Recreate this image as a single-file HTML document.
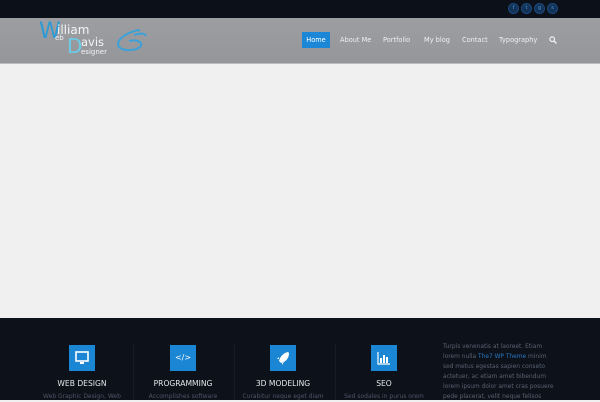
<!DOCTYPE html>
<html><head><meta charset="utf-8"><style>
*{margin:0;padding:0;box-sizing:border-box}
body{width:600px;height:400px;overflow:hidden;font-family:"DejaVu Sans","Liberation Sans",sans-serif;background:#f0f0f0;position:relative}
.top{position:absolute;left:0;top:0;width:600px;height:18px;background:#0b1019}
.soc{position:absolute;top:3px;width:11px;height:11px;border-radius:50%;background:#123257;border:1px solid #1c4a7c;color:#4a8fd0;font-size:5.5px;line-height:9px;text-align:center}
.hdr{position:absolute;left:0;top:18px;width:600px;height:46px;background:linear-gradient(#9d9ea1,#95969a);border-bottom:1px solid #bbb}
.nav{position:absolute;top:36px;font-size:6.6px;color:#eef0f2;white-space:nowrap}
.home{position:absolute;left:302px;top:32px;width:28px;height:16px;background:#1b87d6;color:#fff;font-size:6.6px;line-height:16px;text-align:center}
.ft{position:absolute;left:0;top:318px;width:600px;height:82px;background:#0c111a}
.box{position:absolute;top:345px;width:26px;height:26px;background:#1b86d4}
.tt{position:absolute;top:379px;width:100px;text-align:center;color:#e6e8ea;font-size:7.6px;white-space:nowrap}
.ds{position:absolute;top:393px;width:100px;text-align:center;color:#4e5766;font-size:6px;white-space:nowrap}
.sep{position:absolute;top:343px;width:1px;height:57px;background:#161c26}
.side{position:absolute;left:443px;top:342px;width:140px;color:#5a6370;font-size:5.9px;line-height:10px;white-space:nowrap}
.side span{color:#2a79c0}
.lg{position:absolute;color:#f2f4f6;white-space:nowrap;line-height:1}
</style></head><body>
<div class="top"></div>
<div class="soc" style="left:508px">f</div>
<div class="soc" style="left:521px">t</div>
<div class="soc" style="left:534px">g</div>
<div class="soc" style="left:547px">s</div>
<div class="hdr"></div>
<div class="lg" style="left:39px;top:21px;color:#2a9bd6;font-size:22px">W</div>
<div class="lg" style="left:57px;top:24px;font-size:12px">illiam</div>
<div class="lg" style="left:55px;top:35px;font-size:7px">eb</div>
<div class="lg" style="left:67px;top:36px;color:#6ccbe6;font-size:20px">D</div>
<div class="lg" style="left:81px;top:37px;font-size:11.5px">avis</div>
<div class="lg" style="left:81px;top:49px;font-size:7px">esigner</div>
<svg style="position:absolute;left:113px;top:27px" width="34" height="28" viewBox="0 0 34 28"><path d="M27 3 C17 4 5 11 5 17 C5 24 21 25 27 20 C31 16 25 12 16 14 M21 8 C27 6 32 6 33 9" fill="none" stroke="#3aa2d8" stroke-width="2"/></svg>
<div class="home">Home</div>
<div class="nav" style="left:340px">About Me</div>
<div class="nav" style="left:383px">Portfolio</div>
<div class="nav" style="left:424px">My blog</div>
<div class="nav" style="left:462px">Contact</div>
<div class="nav" style="left:499px">Typography</div>
<svg style="position:absolute;left:549px;top:36px" width="8" height="8" viewBox="0 0 8 8"><circle cx="3.2" cy="3.2" r="2.3" fill="none" stroke="#eef0f2" stroke-width="1.2"/><path d="M5 5L7.5 7.5" stroke="#eef0f2" stroke-width="1.4"/></svg>
<div class="ft"></div>
<div class="sep" style="left:133px"></div><div class="sep" style="left:234px"></div><div class="sep" style="left:335px"></div>
<div class="box" style="left:69px"><svg width="26" height="26"><rect x="7" y="7" width="12" height="9" fill="none" stroke="#fff" stroke-width="1.6"/><rect x="11" y="17" width="4" height="2" fill="#fff"/></svg></div>
<div class="box" style="left:170px"><div style="color:#fff;font-size:8px;text-align:center;line-height:26px">&lt;/&gt;</div></div>
<div class="box" style="left:270px"><svg width="26" height="26"><path d="M18 7 C13 8 10 12 9 16 L11 18 C15 17 19 14 19 8Z M9 14 L7 14 L9 12Z M12 18 L12 20 L14 17Z" fill="#fff"/></svg></div>
<div class="box" style="left:371px"><svg width="26" height="26"><path d="M7 7V19H19" fill="none" stroke="#fff" stroke-width="1.2"/><rect x="9" y="13" width="2" height="5" fill="#fff"/><rect x="12" y="10" width="2" height="8" fill="#fff"/><rect x="15" y="12" width="2" height="6" fill="#fff"/></svg></div>
<div class="tt" style="left:32px">WEB DESIGN</div>
<div class="tt" style="left:133px">PROGRAMMING</div>
<div class="tt" style="left:233px">3D MODELING</div>
<div class="tt" style="left:334px">SEO</div>
<div class="ds" style="left:32px">Web Graphic Design, Web</div>
<div class="ds" style="left:133px">Accomplishes software</div>
<div class="ds" style="left:233px">Curabitur neque eget diam</div>
<div class="ds" style="left:334px">Sed sodales in purus orem</div>
<div class="side">Turpis venenatis at laoreet. Etiam<br>lorem nulla <span>The7 WP Theme</span> minim<br>sed metus egestas sapien conseto<br>actetuer, ac etiam amet bibendum<br>lorem ipsum dolor amet cras posuere<br>pede placerat, velit neque felisos</div>
</body></html>
